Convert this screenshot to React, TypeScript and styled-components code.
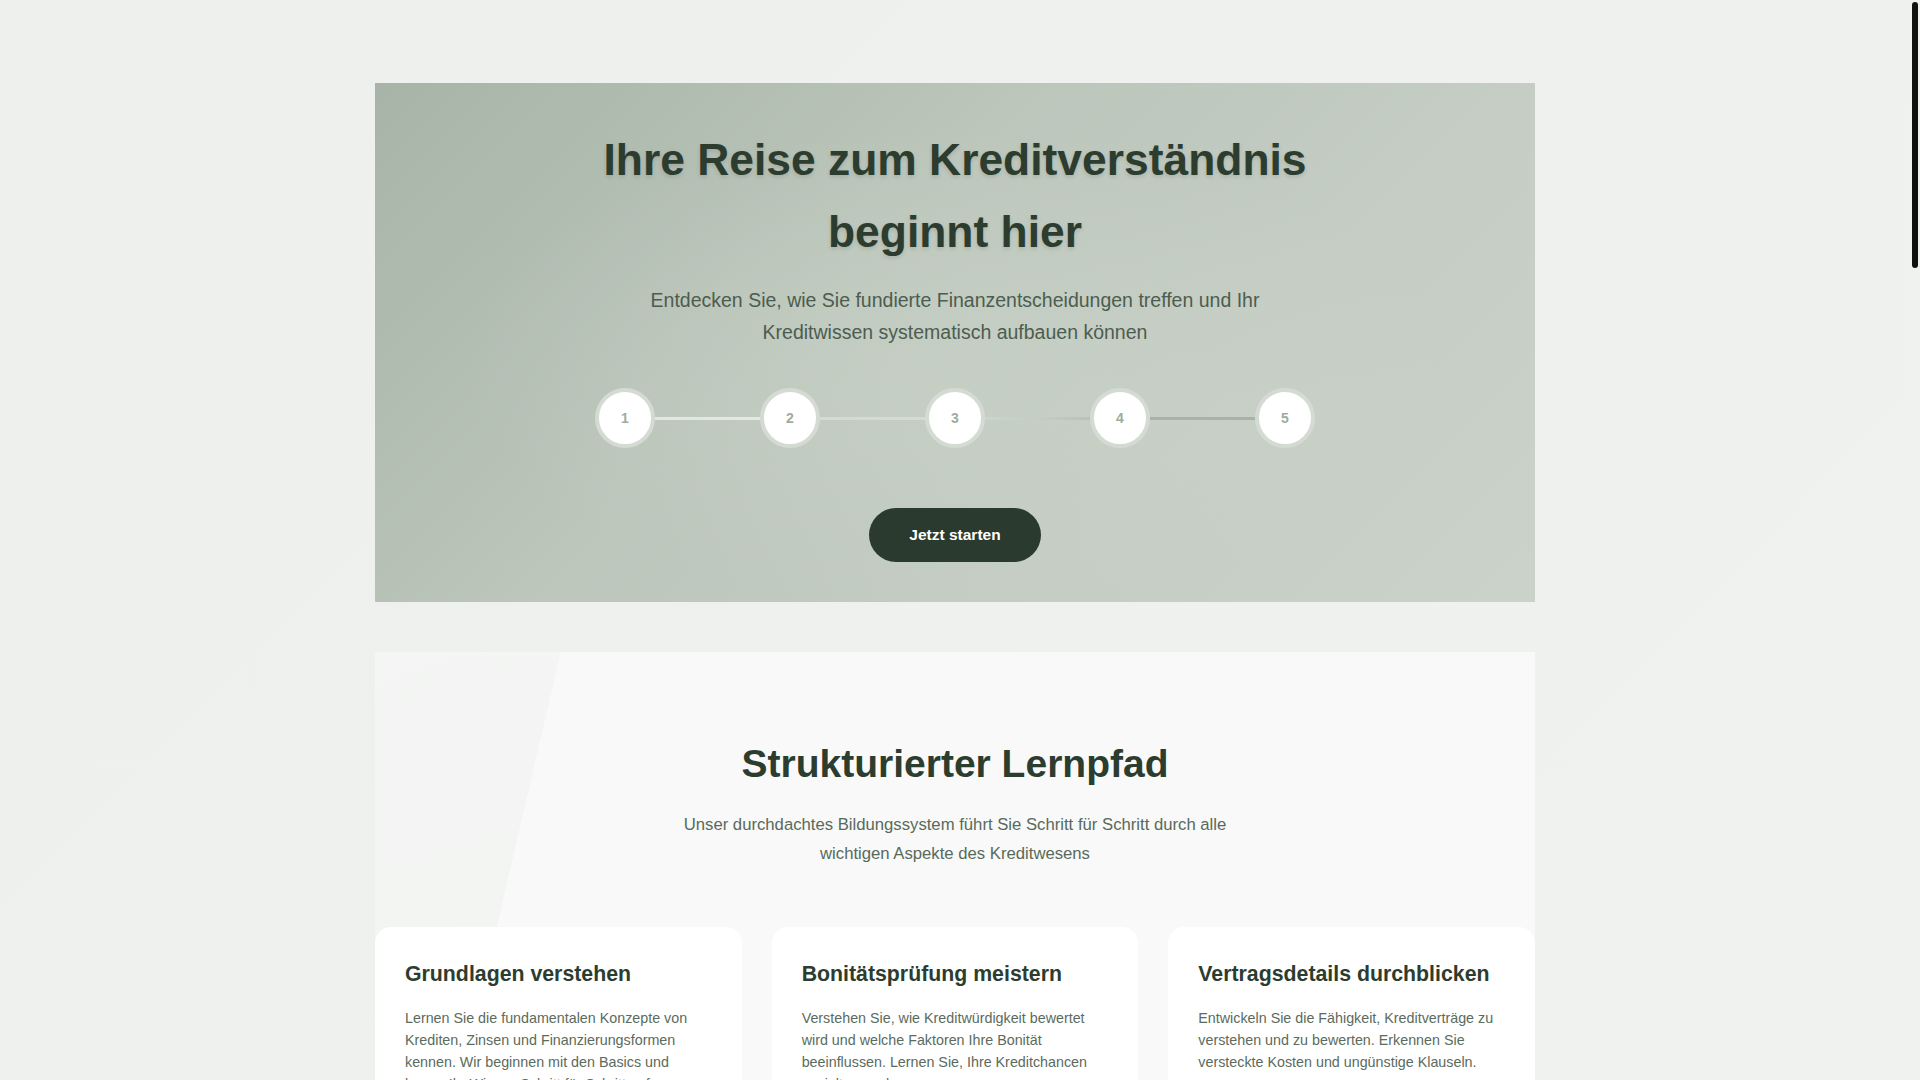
import styled, { createGlobalStyle } from 'styled-components';

const GlobalStyle = createGlobalStyle`
  * { box-sizing: border-box; }
  html, body { margin: 0; padding: 0; }
  body {
    font-family: "Liberation Sans", Arial, sans-serif;
    background: linear-gradient(135deg, #edf0ec 0%, #f0f2ef 50%, #f2f4f1 100%);
    color: #2c3b2f;
  }
  ::-webkit-scrollbar { width: 10px; }
  ::-webkit-scrollbar-track { background: #f0f2ef; }
  ::-webkit-scrollbar-thumb {
    background: #111;
    border-radius: 6px;
    border: 2px solid transparent;
    background-clip: content-box;
  }
`;

// the reference shows a thin dark scrollbar at the right edge
const ScrollTrack = styled.div`
  position: fixed;
  top: 0;
  right: 0;
  width: 10px;
  height: 100vh;
  background: #f0f2ef;
  z-index: 10;

  &::after {
    content: '';
    position: absolute;
    top: 2px;
    left: 2px;
    width: 6px;
    height: 266px;
    border-radius: 3px;
    background: #111;
  }
`;

const Page = styled.div`
  min-height: 4470px;
  padding: 83px 10px 80px 0;
`;

const Container = styled.div`
  max-width: 1160px;
  margin: 0 auto;
`;

const Hero = styled.section`
  position: relative;
  padding: 41px 40px 40px;
  text-align: center;
  background:
    radial-gradient(ellipse at 50% 55%, rgba(210, 218, 208, 0.35) 0%, rgba(210, 218, 208, 0) 60%),
    linear-gradient(135deg, #a8b4a8 0%, #bcc6bb 40%, #c5cdc4 70%, #cad2c9 100%);
  margin-bottom: 50px;

  h1 {
    margin: 0 auto 18px;
    max-width: 760px;
    font-size: 44.4px;
    line-height: 71.6px;
    font-weight: 700;
    color: #2c3d2f;
    text-shadow: 0 2px 4px rgba(0, 0, 0, 0.12);
  }

  p {
    margin: 0 auto 39px;
    max-width: 650px;
    font-size: 19.5px;
    line-height: 31.7px;
    color: #4c5d4f;
  }
`;

const Steps = styled.div`
  display: flex;
  align-items: center;
  justify-content: center;
  margin-bottom: 60px;
`;

const Step = styled.div`
  width: 60px;
  height: 60px;
  border-radius: 50%;
  background: #fff;
  border: 4px solid #d4dbd3;
  display: flex;
  align-items: center;
  justify-content: center;
  font-size: 14px;
  font-weight: 600;
  color: #a0aba0;
`;

const Connector = styled.div<{ $fill: string }>`
  width: 105px;
  height: 3px;
  margin-top: 2px;
  background: ${(p) => p.$fill};
`;

const StartButton = styled.button`
  height: 54px;
  padding: 0 40px;
  border: none;
  border-radius: 27px;
  background: #2b3a2e;
  color: #fff;
  font-family: inherit;
  font-size: 15.5px;
  font-weight: 700;
  cursor: pointer;
`;

const LearnPath = styled.section`
  position: relative;
  overflow: hidden;
  background: #f8f9f8;
  padding: 83px 0 60px;
  text-align: center;

  &::before {
    content: '';
    position: absolute;
    top: 0;
    left: 0;
    width: 200px;
    height: 600px;
    background: linear-gradient(160deg, #f4f5f4 0%, #f2f4f2 60%, #f3f5f3 100%);
    clip-path: polygon(0 0, 186px 0, 46px 600px, 0 600px);
  }

  h2 {
    position: relative;
    margin: 0 0 17px;
    font-size: 39px;
    line-height: 1.5;
    font-weight: 700;
    color: #2c3d2f;
  }

  > p {
    position: relative;
    margin: 0 auto 58px;
    max-width: 600px;
    font-size: 16.7px;
    line-height: 1.75;
    color: #596a5b;
  }
`;

const CardGrid = styled.div`
  position: relative;
  display: grid;
  grid-template-columns: repeat(3, 1fr);
  gap: 30px;
  text-align: left;
`;

const Card = styled.article`
  background: #fff;
  border-radius: 16px;
  padding: 34px 30px 32px;

  h3 {
    margin: 0 0 19px;
    font-size: 21.3px;
    line-height: 1.3;
    font-weight: 700;
    color: #2c3d2f;
  }

  p {
    margin: 0;
    font-size: 14.3px;
    line-height: 22px;
    color: #5b6b5d;
  }
`;

const connectors = [
  'rgba(232, 237, 231, 0.85)',
  'rgba(216, 223, 215, 0.8)',
  'linear-gradient(90deg, rgba(210,218,209,0.5), rgba(190,200,189,0.2) 50%, rgba(170,182,169,0.5))',
  '#a8b3a7',
];

const cards = [
  {
    title: 'Grundlagen verstehen',
    text: 'Lernen Sie die fundamentalen Konzepte von Krediten, Zinsen und Finanzierungsformen kennen. Wir beginnen mit den Basics und bauen Ihr Wissen Schritt für Schritt auf.',
  },
  {
    title: 'Bonitätsprüfung meistern',
    text: 'Verstehen Sie, wie Kreditwürdigkeit bewertet wird und welche Faktoren Ihre Bonität beeinflussen. Lernen Sie, Ihre Kreditchancen gezielt zu verbessern.',
  },
  {
    title: 'Vertragsdetails durchblicken',
    text: 'Entwickeln Sie die Fähigkeit, Kreditverträge zu verstehen und zu bewerten. Erkennen Sie versteckte Kosten und ungünstige Klauseln.',
  },
];

export default function App() {
  return (
    <>
      <GlobalStyle />
      <ScrollTrack />
      <Page>
        <Container>
          <Hero>
            <h1>Ihre Reise zum Kreditverständnis beginnt hier</h1>
            <p>
              Entdecken Sie, wie Sie fundierte Finanzentscheidungen treffen und Ihr
              Kreditwissen systematisch aufbauen können
            </p>
            <Steps>
              {[1, 2, 3, 4, 5].map((n, i) => (
                <>
                  <Step key={`s${n}`}>{n}</Step>
                  {i < 4 && <Connector key={`c${n}`} $fill={connectors[i]} />}
                </>
              ))}
            </Steps>
            <StartButton>Jetzt starten</StartButton>
          </Hero>

          <LearnPath>
            <h2>Strukturierter Lernpfad</h2>
            <p>
              Unser durchdachtes Bildungssystem führt Sie Schritt für Schritt durch alle
              wichtigen Aspekte des Kreditwesens
            </p>
            <CardGrid>
              {cards.map((c) => (
                <Card key={c.title}>
                  <h3>{c.title}</h3>
                  <p>{c.text}</p>
                </Card>
              ))}
            </CardGrid>
          </LearnPath>
        </Container>
      </Page>
    </>
  );
}
